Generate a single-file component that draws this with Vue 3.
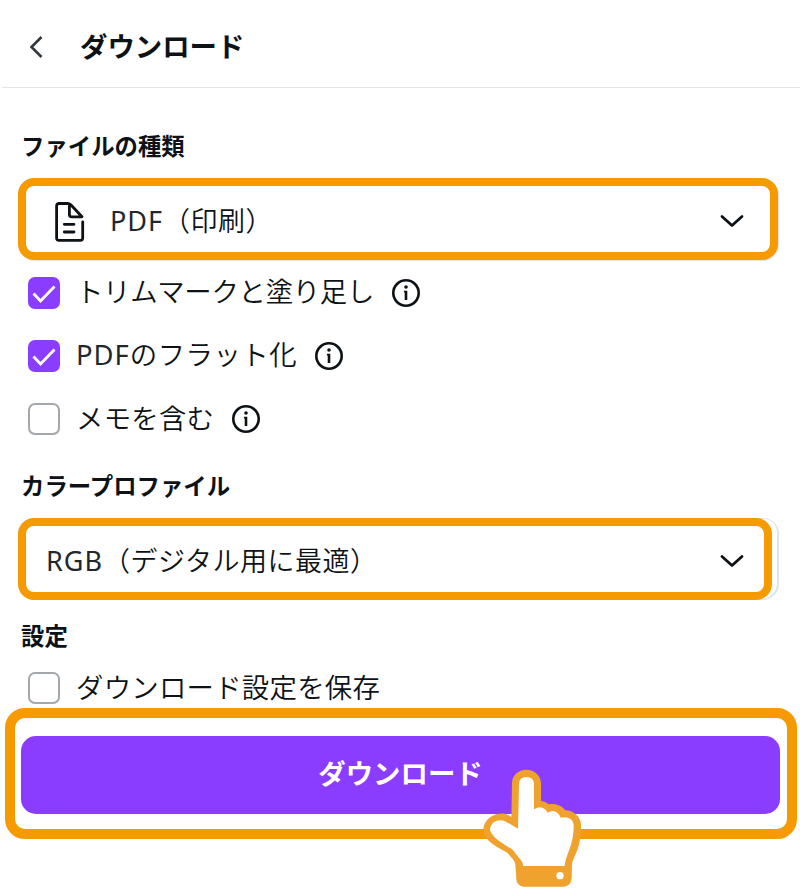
<template>
  <div class="panel">
    <header class="header">
      <button class="back" aria-label="戻る">
        <svg width="16" height="26" viewBox="0 0 16 26">
          <path d="M13.5 3 L3.5 13 L13.5 23" />
        </svg>
      </button>
      <h1>ダウンロード</h1>
    </header>

    <main class="content">
      <h2>ファイルの種類</h2>
      <div class="select highlight">
        <svg class="file-icon" width="32" height="42" viewBox="0 0 32 42">
          <path d="M28.7 21 V37 Q28.7 39.3 26.4 39.3 H4.8 Q2.6 39.3 2.6 37 V5 Q2.6 2.5 5.2 2.5 H13.5 Q15.4 2.5 16.8 3.8 L28 15.8 H17.8 Q15.4 15.8 15.4 13.4 V3.5" />
          <path d="M10.3 23.3 H20 M10.3 31 H20" />
        </svg>
        <span class="value"><span class="latin">PDF</span>（印刷）</span>
        <svg class="chevron" width="26" height="16" viewBox="0 0 26 16">
          <path d="M3 3.5 L13 12.5 L23 3.5" />
        </svg>
      </div>

      <div class="options">
        <label v-for="option in options" :key="option.label" class="option">
          <input v-model="option.checked" type="checkbox">
          <span class="box" :class="{ checked: option.checked }">
            <svg v-if="option.checked" width="32" height="32" viewBox="0 0 32 32">
              <path d="M5.5 16.5 L12.5 24 L26.5 9.5" />
            </svg>
          </span>
          <span class="label"><span v-if="option.prefix" class="latin">{{ option.prefix }}</span>{{ option.label }}</span>
          <svg class="info" width="30" height="30" viewBox="0 0 30 30">
            <circle class="ring" cx="15" cy="15" r="12.7" />
            <circle cx="15" cy="9" r="1.8" />
            <path d="M12.9 12.7 H16.3 V22 H13.7 V14.4 H12.9 Z" />
          </svg>
        </label>
      </div>

      <h2 class="profile-title">カラープロファイル</h2>
      <div class="select-outline">
        <div class="select highlight">
          <span class="value"><span class="latin">RGB</span>（デジタル用に最適）</span>
          <svg class="chevron" width="26" height="16" viewBox="0 0 26 16">
            <path d="M3 3.5 L13 12.5 L23 3.5" />
          </svg>
        </div>
      </div>

      <h2 class="settings-title">設定</h2>
      <label class="option save">
        <input v-model="saveSettings" type="checkbox">
        <span class="box" :class="{ checked: saveSettings }">
          <svg v-if="saveSettings" width="32" height="32" viewBox="0 0 32 32">
            <path d="M5.5 16.5 L12.5 24 L26.5 9.5" />
          </svg>
        </span>
        <span class="label">ダウンロード設定を保存</span>
      </label>
    </main>

    <div class="action highlight">
      <button class="download">ダウンロード</button>
      <svg class="hand" width="99" height="119" viewBox="39 207 297 357">
        <path class="hand-edge" d="M126 250 C126 225 145 209 169 209 S213 227 213 250 V302 Q227 304 236 313 C254 309 276 316 286 331 C310 331 333 350 333 376 C333 440 320 452 306 490 L305 535 Q303 558 282 560 H160 Q140 558 139 538 L136 492 C133 478 120 470 113 459 C90 445 40 425 40 388 C42 355 75 337 104 341 Q116 344 124 351 Z" />
        <path class="hand-fill" d="M147 250 Q149 231 169 231 Q189 231 192 250 V328 Q203 321 212 322 Q226 325 232 338 Q242 332 250 333 Q265 336 272 353 Q286 350 296 354 Q310 360 311 376 C311 440 288 460 284 498 H160 Q159 485 150 477 Q138 462 128 449 C110 438 62 412 60 388 Q63 363 90 361 Q102 361 113 368 L144 386 Z" />
        <circle class="hand-fill" cx="270" cy="527" r="11" />
      </svg>
    </div>
  </div>
</template>

<script setup>
import { ref } from 'vue';

const options = ref([
  { label: 'トリムマークと塗り足し', checked: true },
  { prefix: 'PDF', label: 'のフラット化', checked: true },
  { label: 'メモを含む', checked: false }
]);

const saveSettings = ref(false);
</script>

<style>
body {
  background: #fff;
}
</style>

<style scoped>
.panel {
  box-sizing: border-box;
  width: 800px;
  height: 892px;
  overflow: hidden;
  background: #fff;
  color: #0d1216;
  font-family: "Noto Sans", "Noto Sans CJK JP", sans-serif;
}
.panel svg {
  display: block;
  flex: none;
}
button {
  padding: 0;
  border: none;
  font-family: inherit;
  cursor: pointer;
}
.header {
  display: flex;
  align-items: center;
  box-sizing: border-box;
  height: 88px;
  margin-left: 2px;
  padding: 6px 0 0 26px;
  border-bottom: 1px solid #e3e4e6;
}
.back {
  background: none;
}
.back path {
  fill: none;
  stroke: #33383c;
  stroke-width: 2.6;
}
h1 {
  margin: 0 0 0 36px;
  font-size: 27.4px;
  line-height: 40px;
  font-weight: 600;
}
.content {
  padding: 26px 20px 0 18px;
}
h2 {
  height: 64px;
  margin: 0;
  padding-left: 3px;
  font-size: 23.4px;
  line-height: 64px;
  font-weight: 600;
}
.highlight {
  box-sizing: border-box;
  border: 8px solid #f59a00;
  border-radius: 16px;
  background: #fff;
}
.select {
  display: flex;
  align-items: center;
  width: 760px;
  height: 82px;
  padding: 4px 25px 0 21px;
  box-shadow: 1px 1px 1px #dfe2e8;
}
.file-icon {
  margin: 1px 24px 0 7px;
}
.file-icon path {
  fill: none;
  stroke: #0d1216;
  stroke-width: 2.8;
  stroke-linecap: round;
  stroke-linejoin: round;
}
.value {
  flex: 1;
  font-size: 27px;
  line-height: 40px;
  font-weight: 350;
  letter-spacing: 0.5px;
  white-space: nowrap;
}
.latin {
  color: #22272b;
  font-weight: 400;
  letter-spacing: 1px;
}
.chevron path {
  fill: none;
  stroke: #0d1216;
  stroke-width: 2.8;
  stroke-linecap: round;
  stroke-linejoin: round;
}
.select-outline {
  box-sizing: border-box;
  width: 761px;
  height: 82px;
  border-radius: 16px;
  box-shadow: inset -2px -1px 0 #e1e4ea, inset 0 1px 0 #e1e4ea;
}
.select-outline .select {
  width: 754px;
  padding: 4px 19px 0 20px;
  box-shadow: none;
}
.options {
  padding-top: 1px;
}
.option {
  display: flex;
  align-items: center;
  height: 63.3px;
  padding-left: 10px;
}
.option input {
  position: absolute;
  opacity: 0;
}
.box {
  box-sizing: border-box;
  width: 32px;
  height: 32px;
  border: 2px solid #a4a8ad;
  border-radius: 7px;
}
.box.checked {
  border: none;
  background: #8b3dff;
}
.box path {
  fill: none;
  stroke: #fff;
  stroke-width: 2.8;
}
.label {
  margin: -1px 17px 0 16px;
  font-size: 27.4px;
  line-height: 40px;
  font-weight: 350;
  letter-spacing: 0.25px;
  white-space: nowrap;
}
.option:first-child .label {
  letter-spacing: -0.3px;
}
.option:nth-child(2) .label {
  letter-spacing: 0.5px;
}
.info {
  fill: #0d1216;
}
.ring {
  fill: none;
  stroke: #0d1216;
  stroke-width: 2.6;
}
.profile-title {
  height: 67px;
  padding-top: 2px;
  box-sizing: border-box;
  line-height: 67px;
}
.settings-title {
  height: 72px;
  line-height: 72px;
}
.option.save {
  height: 32px;
}
.save .label {
  margin-top: 0;
}
.action {
  position: relative;
  display: flex;
  width: 792px;
  height: 131px;
  margin: 4px 0 0 5px;
  padding: 18px 7px 14px 6px;
  border-width: 10px;
  border-radius: 20px;
}
.download {
  width: 759px;
  height: 78px;
  padding-bottom: 2px;
  border-radius: 15px;
  background: #8b3dff;
  color: #fff;
  font-size: 27.4px;
  line-height: 40px;
  font-weight: 600;
}
/* pointer drawn over the button and the lower edge of the frame */
.hand {
  position: absolute;
  top: 51px;
  left: 468px;
}
.hand-edge {
  fill: #f0a22e;
}
.hand-fill {
  fill: #fff;
}
</style>
